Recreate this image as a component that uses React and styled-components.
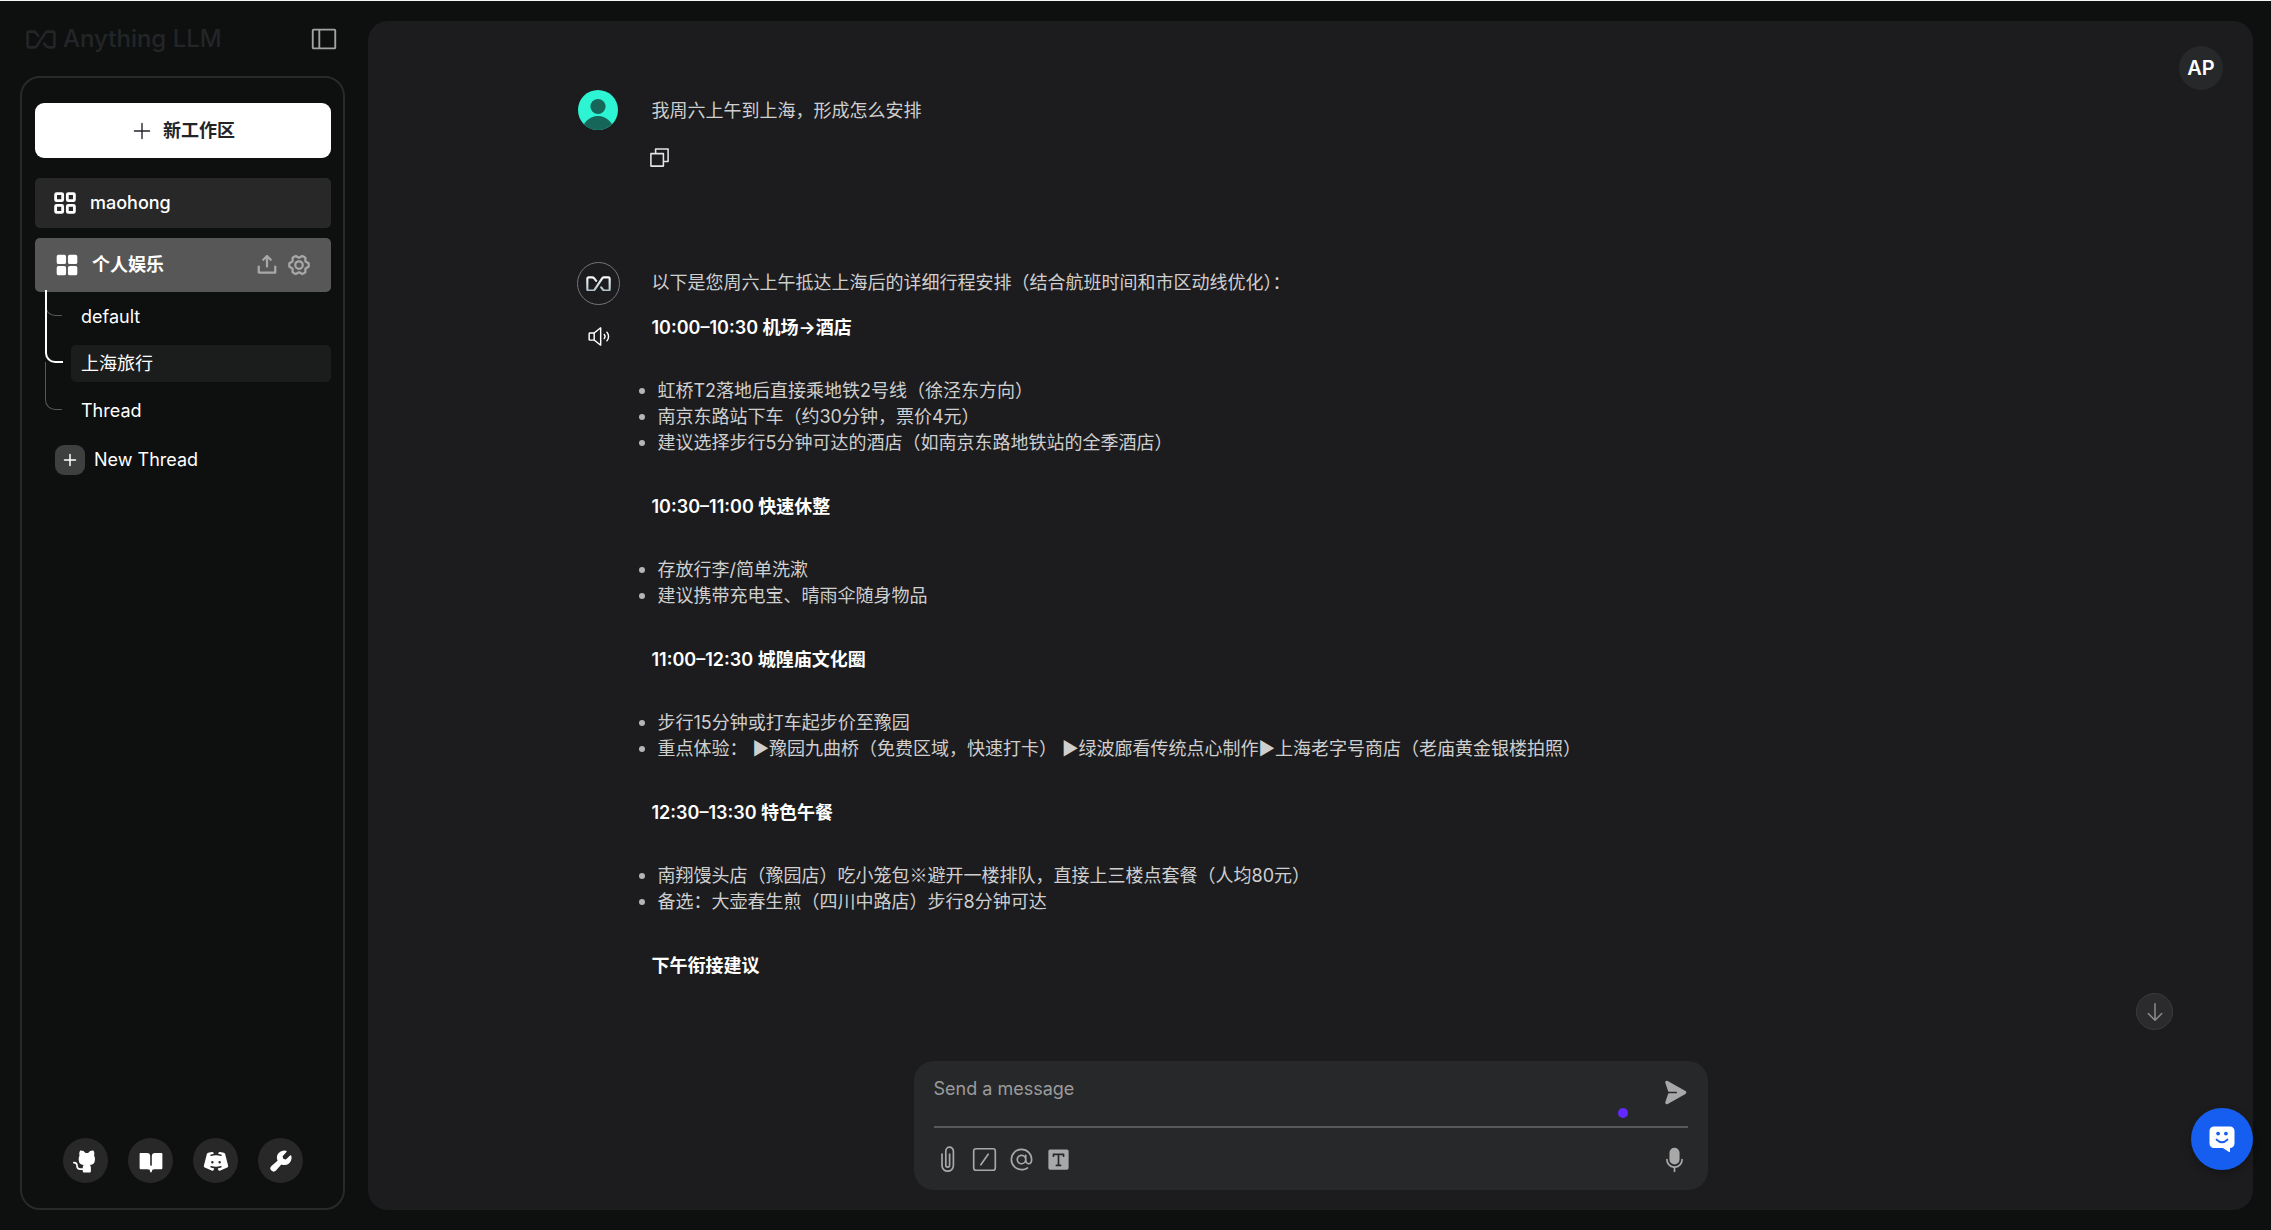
import React, { useState } from "react";
import styled, { createGlobalStyle, css } from "styled-components";
import {
  PiArrowDown,
  PiAt,
  PiBookOpenFill,
  PiCopy,
  PiDiscordLogoFill,
  PiGearSixBold,
  PiGithubLogoFill,
  PiMicrophoneFill,
  PiPaperPlaneRightFill,
  PiPlus,
  PiPlusBold,
  PiSidebarSimple,
  PiSpeakerHigh,
  PiSquaresFourBold,
  PiSquaresFourFill,
  PiTextTFill,
  PiUploadSimpleBold,
  PiWrenchFill,
} from "react-icons/pi";

const T = {
  page: "#0e100f",
  panel: "#1c1c1e",
  input: "#27282a",
  item: "#282828",
  active: "#575757",
  border: "#282a2a",
  text: "#cfcfd0",
  muted: "#a8a8a9",
  line: "#58585a",
  font: 'Inter, "Noto Sans CJK SC", sans-serif',
};

const GlobalStyle = createGlobalStyle`
  * { box-sizing: border-box; }
  body {
    margin: 0;
    background: ${T.page};
    color: #fff;
    font-family: ${T.font};
    font-size: 18px;
    line-height: 26px;
  }
  button, textarea { font: inherit; color: inherit; }
  button { border: 0; padding: 0; background: none; cursor: pointer; }
  a { color: inherit; text-decoration: none; }
  svg { display: block; flex: none; }
`;

const Page = styled.div`
  display: flex;
  gap: 23px;
  height: 100vh;
  padding: 20px 18px 20px 20px;
  border-top: 1px solid #f4f6f6;
`;

const Sidebar = styled.aside`
  display: flex;
  flex-direction: column;
  flex: 0 0 325px;
`;

const Brand = styled.header`
  display: flex;
  align-items: center;
  justify-content: space-between;
  height: 36px;
  margin-bottom: 19px;
  padding: 0 6px;
`;

const BrandName = styled.div`
  display: flex;
  align-items: center;
  gap: 7px;
  color: #232528;
  font-size: 24px;
  font-weight: 500;
`;

const ToggleButton = styled.button`
  color: #a2a3a3;
`;

const Panel = styled.nav`
  display: flex;
  flex-direction: column;
  flex: 1;
  min-height: 0;
  padding: 25px 12px 25px 13px;
  border: 2px solid ${T.border};
  border-radius: 20px;
`;

const NewWorkspace = styled.button`
  display: flex;
  align-items: center;
  justify-content: center;
  gap: 10px;
  height: 55px;
  margin-bottom: 20px;
  border-radius: 9px;
  background: #fff;
  color: #222428;
  font-weight: 600;
`;

const Workspace = styled.div`
  display: flex;
  align-items: center;
  gap: 12px;
  height: ${(p) => (p.$active ? 54 : 50)}px;
  margin-bottom: ${(p) => (p.$active ? 0 : 10)}px;
  padding: 0 20px 0 ${(p) => (p.$active ? 17 : 15)}px;
  border-radius: 5px;
  background: ${(p) => (p.$active ? T.active : T.item)};
  font-weight: ${(p) => (p.$active ? 700 : 500)};
`;

const WorkspaceLink = styled.a`
  display: flex;
  flex: 1;
  align-items: center;
  gap: 10px;
`;

const WorkspaceAction = styled.button`
  margin-left: -4px;
  color: ${T.muted};
`;

const ThreadList = styled.div`
  padding-left: 10px;
`;

const ThreadRow = styled.div`
  position: relative;
  display: flex;
  padding: ${(p) => (p.$first ? 6 : 10)}px 0 0 26px;

  /* tree branch leading from the workspace down to this thread */
  &::before {
    content: "";
    position: absolute;
    left: 0;
    bottom: 19px;
    width: 16px;
    height: ${(p) => (p.$first ? 24 : 47)}px;
    border: 0 solid ${T.line};
    border-width: 0 0 1px 1px;
    border-bottom-left-radius: 10px;
  }

  ${(p) => p.$active && css`
    z-index: 1;
    &::before {
      height: 71px;
      border-color: #fff;
      border-width: 0 0 2px 2px;
    }
  `}
`;

const ThreadLink = styled.a`
  flex: 1;
  height: 37px;
  padding: 0 10px;
  border-radius: 5px;
  line-height: 37px;
  background: ${(p) => (p.$active ? "#1b1d1c" : "transparent")};
`;

const NewThread = styled.button`
  display: flex;
  align-items: center;
  gap: 9px;
  margin: 16px 0 0 20px;
`;

const PlusBox = styled.span`
  display: grid;
  place-items: center;
  width: 30px;
  height: 30px;
  border-radius: 9px;
  background: #3e403f;
`;

const Social = styled.footer`
  display: flex;
  justify-content: center;
  gap: 20px;
  margin-top: auto;
`;

const SocialLink = styled.a`
  display: grid;
  place-items: center;
  width: 45px;
  height: 45px;
  border-radius: 50%;
  background: ${T.item};
`;

const Main = styled.main`
  position: relative;
  display: flex;
  flex-direction: column;
  flex: 1;
  min-width: 0;
  border-radius: 20px;
  background: ${T.panel};
`;

const Account = styled.button`
  position: absolute;
  top: 25px;
  right: 30px;
  width: 44px;
  height: 44px;
  border-radius: 50%;
  background: ${T.input};
  font-size: 20px;
  font-weight: 600;
`;

const History = styled.section`
  flex: 1;
  min-height: 0;
  width: 80%;
  margin: 0 auto;
  padding: 69px 20px 0;
  overflow: hidden;
`;

const Message = styled.article`
  display: grid;
  grid-template-columns: 43px minmax(0, 1fr);
  column-gap: 32px;
  margin-bottom: ${(p) => (p.$spaced ? 92 : 0)}px;
`;

const Side = styled.div`
  display: flex;
  flex-direction: column;
  align-items: center;
  gap: 20px;
`;

const BotAvatar = styled.div`
  display: grid;
  place-items: center;
  width: 43px;
  height: 43px;
  border: 1px solid #757577;
  border-radius: 50%;
`;

const Content = styled.div`
  padding-top: 8px;
  color: ${T.text};
`;

const Para = styled.p`
  margin: 0;
`;

/* reference marks and similar symbols, set full width like the hanzi around them */
const Wide = styled.span`
  font-family: "Noto Sans CJK SC", sans-serif;
  line-height: 1;
`;

const CopyButton = styled.button`
  display: block;
  margin: 21px 0 0 -5px;
  color: #e4e4e5;
`;

const Heading = styled.h3`
  margin: ${(p) => (p.$first ? 19 : 38)}px 0 37px;
  color: #fff;
  font-size: 18px;
  font-weight: 600;
`;

const Bullets = styled.ul`
  margin: 0;
  padding-left: 6px;
`;

const Bullet = styled.li`
  display: flex;
  align-items: center;

  &::before {
    content: "";
    width: 6px;
    height: 6px;
    margin: 0 13px 0 -19px;
    border-radius: 50%;
    background: #b5b5b6;
  }
`;

const ScrollButton = styled.button`
  position: absolute;
  right: 80px;
  bottom: 180px;
  display: grid;
  place-items: center;
  width: 37px;
  height: 37px;
  border: 1px solid #3b3b3d;
  border-radius: 50%;
  background: #2b2b2d;
  color: #8c8c8d;
`;

const Composer = styled.form`
  position: relative;
  width: 794px;
  max-width: 90%;
  margin: 0 auto 20px;
  padding: 15px 20px;
  border-radius: 20px;
  background: ${T.input};
  color: ${T.muted};
`;

const InputRow = styled.div`
  display: flex;
  align-items: flex-start;
  height: 52px;
  border-bottom: 2px solid ${T.line};
`;

const Prompt = styled.textarea`
  flex: 1;
  height: 26px;
  padding: 0;
  border: 0;
  outline: 0;
  resize: none;
  background: none;

  &::placeholder { color: #9b9b9c; opacity: 1; }
`;

const SendButton = styled.button`
  margin-top: 3px;
`;

const Caret = styled.span`
  position: absolute;
  right: 80px;
  top: 47px;
  width: 10px;
  height: 10px;
  border-radius: 50%;
  background: #6327ff;
`;

const Tools = styled.div`
  display: flex;
  align-items: center;
  gap: 10px;
  height: 47px;
  padding-top: 15px;
`;

const ToolButton = styled.button`
  &:last-child { margin-left: auto; }
`;

const HelpBubble = styled.button`
  position: absolute;
  right: 0;
  bottom: 40px;
  display: grid;
  place-items: center;
  width: 62px;
  height: 62px;
  border-radius: 50%;
  background: #155eef;
  box-shadow: 0 4px 8px rgba(0, 0, 0, .25);
`;

const LogoMark = ({ width, stroke = "currentColor" }) => (
  <svg width={width} viewBox="0 0 30 19" fill="none" stroke={stroke} strokeWidth="2.6" strokeLinecap="round" strokeLinejoin="round" aria-hidden="true">
    <defs>
      <linearGradient id="steel" x1="0" y1="0" x2="0" y2="19" gradientUnits="userSpaceOnUse">
        <stop offset="0" stopColor="#ffffff" />
        <stop offset="1" stopColor="#a9bcc4" />
      </linearGradient>
    </defs>
    <path d="M12.2 5.8 9.6 2.6Q8.7 1.6 7.4 1.6H3.2Q1.6 1.6 1.6 3.2v12.6q0 1.6 1.6 1.6h5.2q1.2 0 2-1L19.6 2.6q.8-1 2-1h5.2q1.6 0 1.6 1.6v12.6q0 1.6-1.6 1.6h-4.2q-1.3 0-2.2-1l-2.2-2.8" />
  </svg>
);

const UserAvatar = () => (
  <svg width="40" height="40" viewBox="0 0 40 40" role="img" aria-label="user">
    <clipPath id="round"><circle cx="20" cy="20" r="20" /></clipPath>
    <g clipPath="url(#round)">
      <rect width="40" height="40" fill="#2df5d3" />
      <circle cx="20" cy="16.5" r="7.6" fill="#17665a" />
      <circle cx="20" cy="42" r="16" fill="#17665a" />
    </g>
  </svg>
);

const ClipIcon = () => (
  <svg width="27" height="27" viewBox="0 0 27 27" fill="none" stroke="currentColor" strokeWidth="1.7" strokeLinecap="round" aria-hidden="true">
    <path d="M8 8v11.5a5.7 5.7 0 0 0 11.4 0V5a3.8 3.8 0 0 0-7.6 0v14.3a1.9 1.9 0 0 0 3.8 0V8" />
  </svg>
);

const SlashIcon = () => (
  <svg width="27" height="27" viewBox="0 0 28 28" fill="none" stroke="currentColor" strokeWidth="1.7" strokeLinecap="round" aria-hidden="true">
    <rect x="2.8" y="2.8" width="22.4" height="22.4" rx="2.4" />
    <path d="M17.8 8.5 10.2 19.5" />
  </svg>
);

const SmileIcon = () => (
  <svg width="28" height="28" viewBox="0 0 28 28" aria-hidden="true">
    <path d="M6 1.5h16a4.5 4.5 0 0 1 4.5 4.5v12.5A4.5 4.5 0 0 1 22 23v3.2q0 1.4-1.3.6L14.8 23H6a4.5 4.5 0 0 1-4.5-4.5V6A4.5 4.5 0 0 1 6 1.5z" fill="#fff" />
    <circle cx="10.1" cy="8.6" r="1.9" fill="#155eef" />
    <circle cx="17.9" cy="8.6" r="1.9" fill="#155eef" />
    <path d="M8.6 14.6q5.4 5.4 10.8 0" fill="none" stroke="#155eef" strokeWidth="2" strokeLinecap="round" />
  </svg>
);

const threads = ["default", "上海旅行", "Thread"];

const plan = [
  {
    title: "10:00–10:30 机场→酒店",
    items: [
      "虹桥T2落地后直接乘地铁2号线（徐泾东方向）",
      "南京东路站下车（约30分钟，票价4元）",
      "建议选择步行5分钟可达的酒店（如南京东路地铁站的全季酒店）",
    ],
  },
  { title: "10:30–11:00 快速休整", items: ["存放行李/简单洗漱", "建议携带充电宝、晴雨伞随身物品"] },
  {
    title: "11:00–12:30 城隍庙文化圈",
    items: [
      "步行15分钟或打车起步价至豫园",
      "重点体验： ▶豫园九曲桥（免费区域，快速打卡） ▶绿波廊看传统点心制作▶上海老字号商店（老庙黄金银楼拍照）",
    ],
  },
  {
    title: "12:30–13:30 特色午餐",
    items: [
      <>南翔馒头店（豫园店）吃小笼包<Wide>※</Wide>避开一楼排队，直接上三楼点套餐（人均80元）</>,
      "备选：大壶春生煎（四川中路店）步行8分钟可达",
    ],
  },
  { title: "下午衔接建议", items: [] },
];

const social = [
  ["GitHub", PiGithubLogoFill],
  ["Docs", PiBookOpenFill],
  ["Discord", PiDiscordLogoFill],
  ["Settings", PiWrenchFill],
];

export default function App() {
  const [current, setCurrent] = useState("上海旅行");
  const [message, setMessage] = useState("");

  return (
    <>
      <GlobalStyle />
      <Page>
        <Sidebar>
          <Brand>
            <BrandName><LogoMark width="30" />Anything LLM</BrandName>
            <ToggleButton aria-label="Toggle sidebar"><PiSidebarSimple size={30} /></ToggleButton>
          </Brand>
          <Panel>
            <NewWorkspace><PiPlus size={22} />新工作区</NewWorkspace>
            <Workspace>
              <WorkspaceLink href="#maohong"><PiSquaresFourBold size={30} />maohong</WorkspaceLink>
            </Workspace>
            <Workspace $active>
              <WorkspaceLink href="#personal"><PiSquaresFourFill size={30} />个人娱乐</WorkspaceLink>
              <WorkspaceAction aria-label="Upload"><PiUploadSimpleBold size={24} /></WorkspaceAction>
              <WorkspaceAction aria-label="Workspace settings"><PiGearSixBold size={24} /></WorkspaceAction>
            </Workspace>
            <ThreadList>
              {threads.map((name, i) => (
                <ThreadRow key={name} $first={i === 0} $active={name === current}>
                  <ThreadLink href="#thread" $active={name === current} onClick={() => setCurrent(name)}>{name}</ThreadLink>
                </ThreadRow>
              ))}
            </ThreadList>
            <NewThread><PlusBox><PiPlusBold size={16} /></PlusBox>New Thread</NewThread>
            <Social>
              {social.map(([label, Icon]) => (
                <SocialLink key={label} href="#link" aria-label={label}><Icon size={26} /></SocialLink>
              ))}
            </Social>
          </Panel>
        </Sidebar>

        <Main>
          <History>
            <Message $spaced>
              <Side><UserAvatar /></Side>
              <Content>
                <Para>我周六上午到上海，形成怎么安排</Para>
                <CopyButton aria-label="Copy"><PiCopy size={25} /></CopyButton>
              </Content>
            </Message>
            <Message>
              <Side>
                <BotAvatar><LogoMark width="25" stroke="url(#steel)" /></BotAvatar>
                <button aria-label="Speak message"><PiSpeakerHigh size={23} /></button>
              </Side>
              <Content>
                <Para>以下是您周六上午抵达上海后的详细行程安排（结合航班时间和市区动线优化）：</Para>
                {plan.map(({ title, items }, i) => (
                  <React.Fragment key={title}>
                    <Heading $first={i === 0}>{title}</Heading>
                    {items.length > 0 && (
                      <Bullets>
                        {items.map((item, n) => <Bullet key={n}><span>{item}</span></Bullet>)}
                      </Bullets>
                    )}
                  </React.Fragment>
                ))}
              </Content>
            </Message>
          </History>

          <Composer onSubmit={(e) => e.preventDefault()}>
            <InputRow>
              <Prompt
                aria-label="Message"
                placeholder="Send a message"
                rows={1}
                value={message}
                onChange={(e) => setMessage(e.target.value)}
              />
              <SendButton type="submit" aria-label="Send"><PiPaperPlaneRightFill size={27} /></SendButton>
            </InputRow>
            <Caret />
            <Tools>
              <ToolButton type="button" aria-label="Attach file"><ClipIcon /></ToolButton>
              <ToolButton type="button" aria-label="Slash commands"><SlashIcon /></ToolButton>
              <ToolButton type="button" aria-label="Agents"><PiAt size={27} /></ToolButton>
              <ToolButton type="button" aria-label="Text size"><PiTextTFill size={27} /></ToolButton>
              <ToolButton type="button" aria-label="Microphone"><PiMicrophoneFill size={27} /></ToolButton>
            </Tools>
          </Composer>

          <Account>AP</Account>
          <ScrollButton aria-label="Scroll to bottom"><PiArrowDown size={24} /></ScrollButton>
          <HelpBubble aria-label="Open chat"><SmileIcon /></HelpBubble>
        </Main>
      </Page>
    </>
  );
}
